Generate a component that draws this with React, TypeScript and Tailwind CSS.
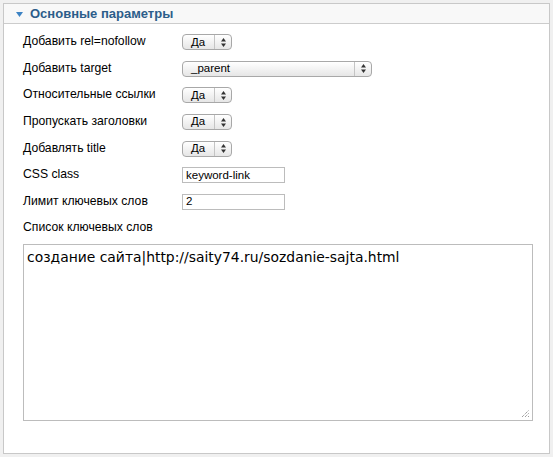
import React from "react";

const FONT = { fontFamily: '"Liberation Sans", Arial, sans-serif' };

const Arrows = () => (
  <svg width="5" height="9" viewBox="0 0 5 9" className="block">
    <path d="M2.5 0 L5 3.5 L0 3.5 Z" fill="#333" />
    <path d="M2.5 9 L5 5.5 L0 5.5 Z" fill="#333" />
  </svg>
);

const Select = ({ value, wide }: { value: string; wide?: boolean }) => (
  <div
    className={`flex h-[16px] items-stretch rounded-[4px] border border-[#a8a8a8] bg-gradient-to-b from-white to-[#e6e6e6] text-[11.5px] text-black ${
      wide ? "w-[190px]" : "w-[50px]"
    }`}
  >
    <div className="flex flex-1 items-center pl-[8px] leading-none">{value}</div>
    <div className="flex w-[17px] items-center justify-center border-l border-[#c4c4c4]">
      <Arrows />
    </div>
  </div>
);

const TextInput = ({ value }: { value: string }) => (
  <div className="flex h-[16px] w-[103px] items-center border border-[#bcbcbc] bg-white pl-[3px] text-[11.5px] leading-none text-black">
    {value}
  </div>
);

const rows: { label: string; control: React.ReactNode }[] = [
  { label: "Добавить rel=nofollow", control: <Select value="Да" /> },
  { label: "Добавить target", control: <Select value="_parent" wide /> },
  { label: "Относительные ссылки", control: <Select value="Да" /> },
  { label: "Пропускать заголовки", control: <Select value="Да" /> },
  { label: "Добавлять title", control: <Select value="Да" /> },
  { label: "CSS class", control: <TextInput value="keyword-link" /> },
  { label: "Лимит ключевых слов", control: <TextInput value="2" /> },
  { label: "Список ключевых слов", control: null },
];

export default function App() {
  return (
    <div className="h-[457px] w-[553px] bg-[#f0f0f0] pl-[3px] pt-[3px]" style={FONT}>
      <div className="h-[451px] w-[547px] border border-[#c8c8c8] bg-white">
        {/* header */}
        <div className="flex h-[20px] items-center border-b border-[#cccccc] bg-[#f8f8f8] pl-[12px]">
          <svg width="7" height="5" viewBox="0 0 7 5" className="mr-[7px] mt-[1px]">
            <path d="M0 0 L7 0 L3.5 5 Z" fill="#3d83c4" />
          </svg>
          <span className="text-[13px] font-bold text-[#2c5d8a]">Основные параметры</span>
        </div>

        <div className="pl-[19px] pt-[5px]">
          {rows.map((r) => (
            <div key={r.label} className="flex h-[26.6px] items-center">
              <div className="w-[159px] pb-[2px] text-[12.2px] text-black">{r.label}</div>
              {r.control}
            </div>
          ))}

          {/* keywords textarea */}
          <div className="relative mt-[2px] h-[177px] w-[510px] border border-[#bcbcbc] bg-white px-[3px] pt-[2px]">
            <div
              className="text-[13.9px] text-black"
              style={{ fontFamily: '"DejaVu Sans", Verdana, sans-serif' }}
            >
              создание сайта|http://saity74.ru/sozdanie-sajta.html
            </div>
            <svg width="9" height="9" viewBox="0 0 9 9" className="absolute bottom-[2px] right-[2px]">
              <path d="M1 8 L8 1 M4 8 L8 4 M7 8 L8 7" stroke="#777" strokeWidth="1" strokeDasharray="1 1" />
            </svg>
          </div>
        </div>
      </div>
    </div>
  );
}
